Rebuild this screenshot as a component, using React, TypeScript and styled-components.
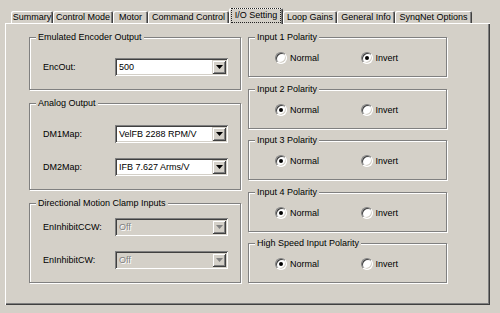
import styled, { createGlobalStyle } from "styled-components";

const GlobalStyle = createGlobalStyle`
  html, body {
    margin: 0;
    padding: 0;
    background: #d4d0c8;
  }
  body {
    font-family: "Liberation Sans", Arial, sans-serif;
    font-size: 9px;
    color: #000;
  }
`;

const Window = styled.div`
  box-sizing: border-box;
  width: 500px;
  height: 313px;
  padding: 8px 0 0 5px;
  overflow: hidden;
`;

const TabStrip = styled.div`
  display: flex;
  align-items: flex-end;
  height: 15px;
  padding-left: 6px;
  position: relative;
  z-index: 1;
`;

const Tab = styled.div<{ $w: number; $active?: boolean }>`
  box-sizing: border-box;
  width: ${({ $w }) => $w}px;
  height: ${({ $active }) => ($active ? 16 : 12)}px;
  margin-bottom: ${({ $active }) => ($active ? -1 : 0)}px;
  padding-bottom: ${({ $active }) => ($active ? 1 : 0)}px;
  display: flex;
  align-items: center;
  justify-content: center;
  background: #d4d0c8;
  border-top-left-radius: 2px;
  border-top-right-radius: 2px;
  box-shadow: inset 1px 1px #fff, inset -1px 0 #404040, inset -2px 0 #808080;
  white-space: nowrap;
  line-height: 11px;
`;

const FocusRing = styled.span`
  border: 1px dotted #222;
  padding: 1px 3px;
`;

const Panel = styled.div`
  box-sizing: border-box;
  width: 485px;
  height: 282px;
  display: flex;
  gap: 7px;
  padding: 14px 0 0 24px;
  box-shadow: inset 1px 1px #fff, inset -1px -1px #404040, inset -2px -2px #808080;
`;

const Column = styled.div<{ $w: number; $gap: number }>`
  width: ${({ $w }) => $w}px;
  display: flex;
  flex-direction: column;
  gap: ${({ $gap }) => $gap}px;
`;

const Group = styled.div<{ $h: number; $pt?: number }>`
  position: relative;
  box-sizing: border-box;
  height: ${({ $h }) => $h}px;
  padding-top: ${({ $pt }) => $pt ?? 0}px;
  border: 1px solid #808080;
  box-shadow: inset 1px 1px #fff, 1px 1px #fff;
  display: flex;
  flex-direction: column;
  gap: 15px;
`;

const Legend = styled.span`
  position: absolute;
  top: -6px;
  left: 6px;
  padding: 0 2px;
  line-height: 11px;
  background: #d4d0c8;
  white-space: nowrap;
`;

const FieldRow = styled.div`
  display: flex;
  align-items: center;
  height: 18px;
  padding-left: 13px;
`;

const FieldLabel = styled.span`
  width: 72px;
`;

const Combo = styled.div<{ $disabled?: boolean }>`
  box-sizing: border-box;
  width: 113px;
  height: 18px;
  display: flex;
  align-items: center;
  padding: 2px;
  background: ${({ $disabled }) => ($disabled ? "#d4d0c8" : "#fff")};
  box-shadow: inset 1px 1px #808080, inset -1px -1px #fff, inset 2px 2px #404040,
    inset -2px -2px #d4d0c8;
`;

const ComboText = styled.span<{ $disabled?: boolean }>`
  flex: 1;
  padding-left: 2px;
  white-space: nowrap;
  color: ${({ $disabled }) => ($disabled ? "#808080" : "#000")};
  text-shadow: ${({ $disabled }) => ($disabled ? "1px 1px #fff" : "none")};
`;

const DropButton = styled.span`
  box-sizing: border-box;
  width: 14px;
  height: 14px;
  flex-shrink: 0;
  display: flex;
  align-items: center;
  justify-content: center;
  background: #d4d0c8;
  box-shadow: inset 1px 1px #d4d0c8, inset -1px -1px #404040, inset 2px 2px #fff,
    inset -2px -2px #808080;
`;

const RadioRow = styled.div`
  display: flex;
  align-items: center;
  height: 100%;
  box-sizing: border-box;
  padding: 2px 0 0 26px;
`;

const RadioOption = styled.label`
  display: flex;
  align-items: center;
  gap: 3px;
  width: 87px;
`;

const RadioCircle = styled.span<{ $checked?: boolean }>`
  box-sizing: border-box;
  width: 12px;
  height: 12px;
  border-radius: 50%;
  background: #fff;
  border: 1px solid;
  border-color: #808080 #fff #fff #808080;
  box-shadow: inset 1px 1px #404040, inset -1px -1px #d4d0c8;
  display: flex;
  align-items: center;
  justify-content: center;

  &::after {
    content: "";
    width: 4px;
    height: 4px;
    border-radius: 50%;
    background: ${({ $checked }) => ($checked ? "#000" : "transparent")};
  }
`;

const tabs = [
  { label: "Summary", w: 42 },
  { label: "Control Mode", w: 60 },
  { label: "Motor", w: 35 },
  { label: "Command Control", w: 81 },
  { label: "I/O Setting", w: 54, active: true },
  { label: "Loop Gains", w: 54 },
  { label: "General Info", w: 58 },
  { label: "SynqNet Options", w: 77 },
];

const polarities = [
  { title: "Input 1 Polarity", invert: true },
  { title: "Input 2 Polarity", invert: false },
  { title: "Input 3 Polarity", invert: false },
  { title: "Input 4 Polarity", invert: false },
  { title: "High Speed Input Polarity", invert: false },
];

const Arrow = ({ disabled }: { disabled?: boolean }) => (
  <svg width="7" height="4" viewBox="0 0 7 4">
    <path d="M0 0h7L3.5 4z" fill={disabled ? "#808080" : "#000"} />
  </svg>
);

const Field = ({ label, value, disabled }: { label: string; value: string; disabled?: boolean }) => (
  <FieldRow>
    <FieldLabel>{label}</FieldLabel>
    <Combo $disabled={disabled}>
      <ComboText $disabled={disabled}>{value}</ComboText>
      <DropButton>
        <Arrow disabled={disabled} />
      </DropButton>
    </Combo>
  </FieldRow>
);

const App = () => {
  return (
    <>
      <GlobalStyle />
      <Window>
        <TabStrip>
          {tabs.map((t) => (
            <Tab key={t.label} $w={t.w} $active={t.active}>
              {t.active ? <FocusRing>{t.label}</FocusRing> : t.label}
            </Tab>
          ))}
        </TabStrip>
        <Panel>
          <Column $w={212} $gap={13}>
            <Group $h={53} $pt={20}>
              <Legend>Emulated Encoder Output</Legend>
              <Field label="EncOut:" value="500" />
            </Group>
            <Group $h={87} $pt={21}>
              <Legend>Analog Output</Legend>
              <Field label="DM1Map:" value="VelFB 2288 RPM/V" />
              <Field label="DM2Map:" value="IFB 7.627 Arms/V" />
            </Group>
            <Group $h={80} $pt={14}>
              <Legend>Directional Motion Clamp Inputs</Legend>
              <Field label="EnInhibitCCW:" value="Off" disabled />
              <Field label="EnInhibitCW:" value="Off" disabled />
            </Group>
          </Column>
          <Column $w={199} $gap={11.5}>
            {polarities.map((p) => (
              <Group key={p.title} $h={40}>
                <Legend>{p.title}</Legend>
                <RadioRow>
                  <RadioOption>
                    <RadioCircle $checked={!p.invert} />
                    Normal
                  </RadioOption>
                  <RadioOption>
                    <RadioCircle $checked={p.invert} />
                    Invert
                  </RadioOption>
                </RadioRow>
              </Group>
            ))}
          </Column>
        </Panel>
      </Window>
    </>
  );
};

export default App;
